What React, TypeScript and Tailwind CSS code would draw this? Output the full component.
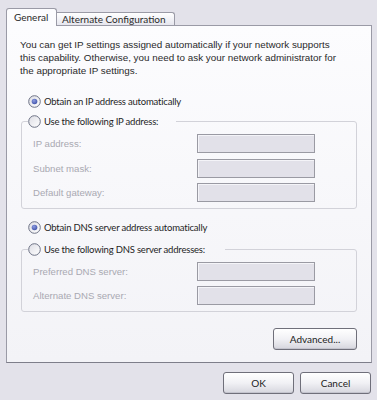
import React from "react";

function Radio({ checked }: { checked?: boolean }) {
  return (
    <svg width="13" height="13" viewBox="0 0 13 13" className="shrink-0">
      <defs>
        <linearGradient id="rg" x1="0" y1="0" x2="1" y2="1">
          <stop offset="0" stopColor="#DCDCE4" />
          <stop offset="1" stopColor="#FFFFFF" />
        </linearGradient>
        <radialGradient id="dot" cx="0.4" cy="0.35" r="0.7">
          <stop offset="0" stopColor="#8C9BE0" />
          <stop offset="1" stopColor="#3F51A8" />
        </radialGradient>
      </defs>
      <circle cx="6.5" cy="6.5" r="5.8" fill="url(#rg)" stroke="#6E7386" strokeWidth="1" />
      {checked && <circle cx="6.5" cy="6.5" r="2.8" fill="url(#dot)" />}
    </svg>
  );
}

function Field({ label, mt }: { label: string; mt: string }) {
  return (
    <div className={`flex items-center h-[19px] ${mt}`}>
      <div className="w-[169px] pl-[5px] text-[#A9A9B2] text-[9.6px]">{label}</div>
      <div className="w-[118px] h-[19px] border border-[#9A9AA3] bg-[#E2E1E9] shadow-[inset_1px_1px_0_#F4F4F8]" />
    </div>
  );
}

function Btn({ label, w, h }: { label: string; w: string; h: string }) {
  return (
    <div
      className={`${w} ${h} flex items-center justify-center rounded-[3px] border border-[#6F6F7A] bg-gradient-to-b from-[#FFFFFF] via-[#F1F1F5] to-[#D6D6DE] shadow-[inset_0_-1px_0_#C4C4CE] text-[#222] font-['Lato',sans-serif] text-[10px]`}
    >
      {label}
    </div>
  );
}

export default function App() {
  return (
    <div className="w-[377px] h-[400px] bg-[#E3E2EA] pt-[8px] text-[#2A2A2A] text-[9.85px] leading-[13px] font-['Liberation_Sans',Arial,sans-serif] overflow-hidden">
      <div className="flex items-end h-[17px] pl-[6px] font-['Lato',sans-serif] text-[10px]">
        <div className="relative z-10 h-[18px] w-[51px] -mb-[1px] border border-b-0 border-[#9A9AA6] rounded-t-[3px] bg-[#FCFCFE] pl-[7px] pt-[2px]">
          General
        </div>
        <div className="h-[13px] w-[118px] border-t border-r border-[#9A9AA6] rounded-tr-[3px] bg-gradient-to-b from-[#FFFFFF] to-[#E6E6EE] pl-[5px] leading-[13px]">
          Alternate Configuration
        </div>
      </div>
      <div className="ml-[6px] w-[366px] h-[338px] border border-[#9A9AA6] border-b-[#7E7E8A] bg-gradient-to-b from-[#FCFCFE] to-[#F3F3F7]">
        <p className="ml-[13px] mt-[12px] leading-[13px]">
          You can get IP settings assigned automatically if your network supports
          <br />
          this capability. Otherwise, you need to ask your network administrator for
          <br />
          the appropriate IP settings.
        </p>
        <div className="ml-[21px] mt-[18px] flex items-center gap-[3px] h-[13px] font-['Lato',sans-serif] text-[9.5px] tracking-[-0.2px] text-[#1E1E1E]">
          <Radio checked />
          <span>Obtain an IP address automatically</span>
        </div>
        <fieldset className="ml-[14px] mt-[7px] w-[336px] border border-[#D2D2D9] rounded-[3px] px-[6px] pb-[6px]">
          <legend className="flex items-center gap-[3px] h-[13px] pr-[18px] font-['Lato',sans-serif] text-[9.5px] tracking-[-0.2px] text-[#1E1E1E]">
            <Radio />
            <span>Use the following IP address:</span>
          </legend>
          <Field label="IP address:" mt="mt-[6px]" />
          <Field label="Subnet mask:" mt="mt-[6px]" />
          <Field label="Default gateway:" mt="mt-[5px]" />
        </fieldset>
        <div className="ml-[21px] mt-[12px] flex items-center gap-[3px] h-[13px] font-['Lato',sans-serif] text-[9.5px] tracking-[-0.2px] text-[#1E1E1E]">
          <Radio checked />
          <span>Obtain DNS server address automatically</span>
        </div>
        <fieldset className="ml-[14px] mt-[9px] w-[336px] border border-[#D2D2D9] rounded-[3px] px-[6px] pb-[6px]">
          <legend className="flex items-center gap-[3px] h-[13px] pr-[20px] font-['Lato',sans-serif] text-[9.5px] tracking-[-0.2px] text-[#1E1E1E]">
            <Radio />
            <span>Use the following DNS server addresses:</span>
          </legend>
          <Field label="Preferred DNS server:" mt="mt-[6px]" />
          <Field label="Alternate DNS server:" mt="mt-[5px]" />
        </fieldset>
        <div className="ml-[14px] mt-[16px] w-[336px] flex justify-end">
          <Btn label="Advanced..." w="w-[84px]" h="h-[22px]" />
        </div>
      </div>
      <div className="mt-[9px] pr-[6px] flex justify-end gap-[6px]">
        <Btn label="OK" w="w-[71px]" h="h-[22px]" />
        <Btn label="Cancel" w="w-[71px]" h="h-[22px]" />
      </div>
    </div>
  );
}
